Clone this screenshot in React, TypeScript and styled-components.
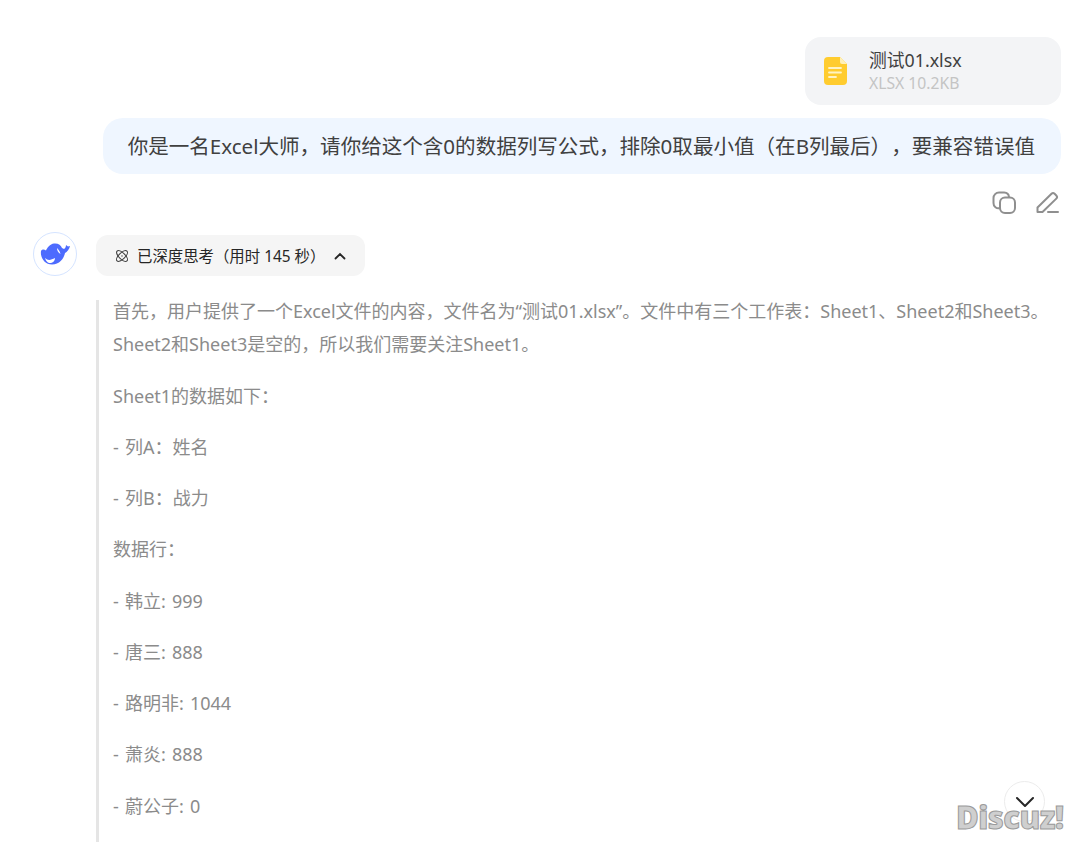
import styled, { createGlobalStyle } from 'styled-components';

const paragraphs = [
  '首先，用户提供了一个Excel文件的内容，文件名为“测试01.xlsx”。文件中有三个工作表：Sheet1、Sheet2和Sheet3。Sheet2和Sheet3是空的，所以我们需要关注Sheet1。',
  'Sheet1的数据如下：',
  '- 列A：姓名',
  '- 列B：战力',
  '数据行：',
  '- 韩立: 999',
  '- 唐三: 888',
  '- 路明非: 1044',
  '- 萧炎: 888',
  '- 蔚公子: 0',
];

const GlobalStyle = createGlobalStyle`
  html, body {
    margin: 0;
    height: 100%;
    overflow: hidden;
    background: #fff;
  }
  body {
    font-family: "Noto Sans", "Noto Sans CJK SC", sans-serif;
    text-spacing-trim: space-all;
  }
`;

const App = () => (
  <>
    <GlobalStyle />
    <Page>
      <UserColumn>
        <FileCard>
          <FileIcon viewBox="0 0 24 30">
            <path d="M5 1h12l7 7v17a4 4 0 0 1-4 4H5a4 4 0 0 1-4-4V5a4 4 0 0 1 4-4z" fill="#ffcc2f" />
            <path d="M17 1l7 7h-5a2 2 0 0 1-2-2z" fill="#fff0b8" />
            <path d="M6 12h12M6 16.500h12M6 21h7" stroke="#fff3c4" strokeWidth="1.800" strokeLinecap="round" />
          </FileIcon>
          <FileText>
            <FileName>测试01.xlsx</FileName>
            <FileMeta>XLSX 10.2KB</FileMeta>
          </FileText>
        </FileCard>
        <Bubble>你是一名Excel大师，请你给这个含0的数据列写公式，排除0取最小值（在B列最后），要兼容错误值</Bubble>
        <Actions>
          <ActionIcon viewBox="0 0 24 24">
            <rect x="8" y="6.500" width="15" height="15.500" rx="5" />
            <path d="M17 6a5 5 0 0 0-4.800-4.500H7A5.500 5.500 0 0 0 1.500 7v5A5 5 0 0 0 8 17" />
          </ActionIcon>
          <ActionIcon viewBox="0 0 24 24">
            <path d="M1.500 21v-4.500L15.500 2.800a2.200 2.200 0 0 1 3.100 0l1.700 1.700a2.200 2.200 0 0 1 0 3.100L6.500 21z" />
            <path d="M12 21h10" />
          </ActionIcon>
        </Actions>
      </UserColumn>
      <AnswerRow>
        <Avatar>
          <svg viewBox="0 0 30 22" width="30" height="22">
            <path
              d="M1 8C2 6 4 6 6 7.500 7 5 10 1 14 .5c4-.5 7 1.500 8 4.500l2 1c1.500-1 2-2.500 2-4l2 1.500 2-.5c-.5 3-3 6-5 7-1 5-5 11.500-13 11.500C5 21.500 0 15 1 8z"
              fill="#4d6bfe"
            />
            <path d="M5 15c3 3 6 2 10 0 0 3.500-3 5.500-6 5-2-.5-3.500-3-4-5z" fill="#fff" />
            <path d="M17 5c2 2 3 4 3.500 6-2-1-3.500-3-3.500-6z" fill="#fff" />
          </svg>
        </Avatar>
        <AnswerBody>
          <ThinkingChip>
            <svg viewBox="0 0 16 16" width="16" height="16" fill="none" stroke="#404040" strokeWidth="1.100">
              <ellipse cx="8" cy="8" rx="7" ry="3.100" transform="rotate(45 8 8)" />
              <ellipse cx="8" cy="8" rx="7" ry="3.100" transform="rotate(-45 8 8)" />
              <circle cx="8" cy="8" r="0.700" fill="#404040" stroke="none" />
            </svg>
            <ChipLabel>已深度思考（用时 145 秒）</ChipLabel>
            <svg viewBox="0 0 12 8" width="12" height="8" fill="none" stroke="#262626" strokeWidth="1.800" strokeLinecap="round">
              <path d="M1.500 6.500L6 2l4.500 4.500" />
            </svg>
          </ThinkingChip>
          <Thoughts>
            {paragraphs.map((text) => (
              <Thought key={text}>{text}</Thought>
            ))}
          </Thoughts>
        </AnswerBody>
      </AnswerRow>
      <ScrollButton>
        <svg viewBox="0 0 20 12" width="20" height="12" fill="none" stroke="#262626" strokeWidth="2" strokeLinecap="round" strokeLinejoin="round">
          <path d="M2 2l8 8 8-8" />
        </svg>
      </ScrollButton>
      <Watermark>Discuz!</Watermark>
    </Page>
  </>
);

const Page = styled.main`
  position: relative;
  width: 1080px;
  height: 842px;
  overflow: hidden;
  padding: 37px 19px 0 33px;
  box-sizing: border-box;
`;

const UserColumn = styled.section`
  display: flex;
  flex-direction: column;
  align-items: flex-end;
`;

const FileCard = styled.div`
  display: flex;
  align-items: center;
  gap: 22px;
  width: 256px;
  height: 68px;
  padding-left: 18px;
  box-sizing: border-box;
  background: #f3f4f6;
  border-radius: 16px;
`;

const FileIcon = styled.svg`
  width: 24px;
  height: 30px;
  flex: none;
`;

const FileText = styled.div`
  display: flex;
  flex-direction: column;
  gap: 1px;
  margin-bottom: 2px;
`;

const FileName = styled.div`
  font-size: 17.800px;
  line-height: 24px;
  color: #404040;
`;

const FileMeta = styled.div`
  font-size: 15.700px;
  line-height: 20px;
  color: #c4c4c4;
`;

const Bubble = styled.div`
  margin-top: 13px;
  height: 56px;
  line-height: 56px;
  padding: 0 26px 0 25px;
  background: #eff6ff;
  border-radius: 20px;
  font-size: 20.560px;
  color: #404040;
  white-space: nowrap;
`;

const Actions = styled.div`
  display: flex;
  gap: 20px;
  margin-top: 17px;
  padding-right: 1px;
`;

const ActionIcon = styled.svg`
  width: 24px;
  height: 24px;
  fill: none;
  stroke: #8f8f8f;
  stroke-width: 2;
  stroke-linecap: round;
  stroke-linejoin: round;
`;

const AnswerRow = styled.section`
  display: flex;
  gap: 19px;
  margin-top: 20px;
`;

const Avatar = styled.div`
  display: flex;
  align-items: center;
  justify-content: center;
  width: 44px;
  height: 44px;
  margin-top: -3px;
  flex: none;
  box-sizing: border-box;
  background: #fff;
  border: 1px solid #d5e4ff;
  border-radius: 50%;
`;

const AnswerBody = styled.div`
  flex: 1;
  min-width: 0;
`;

const ThinkingChip = styled.div`
  display: inline-flex;
  align-items: center;
  width: 269px;
  height: 41px;
  padding-left: 18px;
  box-sizing: border-box;
  background: #f5f5f5;
  border-radius: 12px;
  color: #262626;
`;

const ChipLabel = styled.span`
  margin: 0 9px 1px 7px;
  font-size: 15.400px;
  white-space: nowrap;
`;

const Thoughts = styled.div`
  display: flow-root;
  min-height: 600px;
  margin-top: 24px;
  padding-left: 14px;
  border-left: 3px solid #e5e5e5;
`;

const Thought = styled.p`
  margin: 0 0 18px;
  font-size: 18px;
  line-height: 33.250px;
  word-spacing: 1.500px;
  color: #8b8b8b;

  &:first-child {
    margin-top: -5px;
  }
`;

const ScrollButton = styled.div`
  position: absolute;
  left: 1004px;
  top: 781px;
  display: flex;
  align-items: center;
  justify-content: center;
  width: 41px;
  height: 41px;
  box-sizing: border-box;
  background: #fff;
  border: 1px solid #ececec;
  border-radius: 50%;
`;

const Watermark = styled.div`
  position: absolute;
  left: 956px;
  top: 797px;
  font-family: "Open Sans", sans-serif;
  font-size: 31px;
  line-height: 40px;
  font-weight: 800;
  color: #cfcfcf;
  -webkit-text-stroke: 1px #9a9a9a;
  letter-spacing: -0.5px;
`;

export default App;
